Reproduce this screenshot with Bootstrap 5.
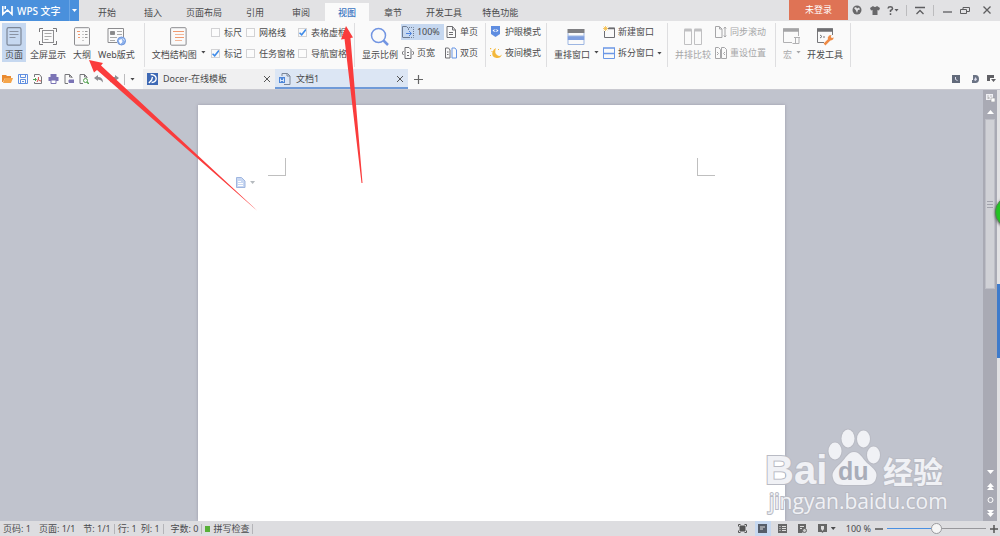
<!DOCTYPE html>
<html lang="zh-CN">
<head>
<meta charset="utf-8">
<meta name="viewport" content="width=device-width, initial-scale=1">
<title>WPS 文字</title>
<link rel="stylesheet" href="https://cdn.jsdelivr.net/npm/bootstrap@5.3.0/dist/css/bootstrap.min.css">
<style>
:root{--ink:#4a4a4c;--blue:#5b8be0;--sel:#c6d8f0}
body{font-family:"Noto Sans","Noto Sans CJK SC",sans-serif;font-size:9px;line-height:12px;color:var(--ink);background:#fafafa;overflow:hidden}
button{border:0;background:none;padding:0;color:inherit;white-space:nowrap;line-height:12px}
svg{display:block;flex:none}
.titlebar{height:21px;background:#e2e2e4}
.brand-btn{background:#4a90dc;color:#fff;font-size:10px;font-weight:500;width:79px;height:21px;padding:0 0 0 2px}
.brand-btn .split{border-left:1px solid #6ba5e4;width:10px;height:21px}
.tabs{margin-left:5px}
.mtab{padding:1px 13px 0;margin:3px 1px 0;height:18px}
.mtab.wide{padding:1px 9px 0}
.mtab.on{background:#fafafa;color:#3c76c2;font-weight:500}
.login{background:#df7355;color:#fff;width:59px;height:20px}
.wbtn{width:18px;height:20px;color:#5e5e60}
.vline{width:1px;height:11px;background:#bcbcbe}
.ribbon{height:48px;padding-top:2px;padding-left:2px}
.rgroup{display:flex;height:44px;border-right:1px solid #dedee0;padding-right:4px}
.views{gap:1px;padding-right:2px}
.bigbtn{height:39px;padding:2px 3px 0}
.bigbtn svg.pic{margin:0 auto 3px}
.bigbtn.on,.smallbtn.on{background:var(--sel)}
.smallbtn{height:16px;padding:0 1px;display:flex;align-items:center;gap:3px}
.smallgrid,.checks{display:grid;grid-auto-rows:17px;row-gap:4px;margin-top:1px;align-content:start}
.modes{padding-left:3px}
.two{grid-template-columns:43px auto;padding-right:2px}
.dim{color:#a6a6a8}
.caret{display:inline-block;width:5px;height:3px;background:currentColor;clip-path:polygon(0 0,100% 0,50% 100%);flex:none}
.checks{grid-template-columns:35px 52px auto;padding:0 3px 0 2px}
.checks label{display:flex;align-items:center;gap:4px;white-space:nowrap}
.checks input{appearance:none;width:9px;height:9px;margin:0;border:1px solid #d2d2d4;background:#fcfcfc}
.checks input:checked{background:url("data:image/svg+xml,%3Csvg xmlns='http://www.w3.org/2000/svg' viewBox='0 0 8 8'%3E%3Cpath d='M1 4l2 2 4-5' fill='none' stroke='%233f8be8' stroke-width='1.5'/%3E%3C/svg%3E") center/8px no-repeat;border-color:#d2d2d4}
.docbar{height:21px;border-bottom:1px solid #c9c9d0}
.quick{gap:5px;padding-left:2px}
.doctab{height:20px;padding:0 5px 0 4px;background:#f0f0f1;width:132px}
.doctab a{margin-left:5px}
.doctab.on{background:#dce6f4;width:133px;box-shadow:inset 0 -2px #6f9ad8}
.addtab{margin-left:6px}
.desk{background:#c0c3cd;min-height:0;overflow:hidden}
.sheet{width:59.7%;margin-top:15px;background:#fff;box-shadow:0 0 3px #9a9aa8;padding:53px 70px 0}
.corner{width:18px;height:18px;border-bottom:1px solid #bfbfbf}
.corner.l{border-right:1px solid #bfbfbf}.corner.r{border-left:1px solid #bfbfbf}
.smarttag{margin:1px 0 0 -32px}
.scroll{width:14px;background:#a9aab4;color:#fff}
.thumb{width:10px;height:170px;background:#d0d1d6;border:1px solid #bdbec6;margin-top:5px}
.edge{width:3px;background:#e2e2e4}
.handle{right:0;top:194px;width:3px;height:74px;background:#3f7bcb}
.ball{right:-27px;top:106px;width:32px;height:32px;border-radius:50%;background:#23c323;border:1px solid #4c8a4c;box-shadow:0 1px 3px #555}
.wmark{right:38px;bottom:1px}
.statusbar{height:15px;background:#dddde0;white-space:nowrap;padding-left:3px}
.statusbar .bar{width:1px;height:10px;background:#b4b4b8;margin:0 3px}
.spell{margin-left:3px}
.statusright{padding-right:2px}
.zoomtext{margin-left:10px}
.viewbtn{width:16px;height:15px}
.viewbtn.on{background:var(--sel)}
.zoomer{appearance:none;width:99px;height:11px;background:linear-gradient(90deg,#4a90e2 50%,#98989c 50%) center/100% 1px no-repeat;margin:0 4px}
.zoomer::-webkit-slider-thumb{appearance:none;width:11px;height:11px;border-radius:50%;background:#f6f6f6;border:1px solid #9a9a9e}
.arrows{left:0;top:0;pointer-events:none;z-index:5}
</style>
<script src="https://cdn.jsdelivr.net/npm/bootstrap@5.3.0/dist/js/bootstrap.bundle.min.js"></script>
</head>
<body class="vh-100 d-flex flex-column position-relative">

<header class="titlebar d-flex align-items-start">
  <button class="brand-btn d-flex align-items-center">
    <svg width="11" height="11" viewBox="0 0 11 11" fill="none" stroke="#fff" stroke-width="1.6"><path d="M.8 1v8.3L5.5 5l4.500 4.300V1M3.200 1v3"/></svg>
    <span class="ms-1 me-auto">WPS 文字</span>
    <span class="split d-flex align-items-center justify-content-center"><i class="caret"></i></span>
  </button>
  <nav class="d-flex tabs">
    <button class="mtab">开始</button><button class="mtab">插入</button><button class="mtab wide">页面布局</button><button class="mtab">引用</button><button class="mtab">审阅</button><button class="mtab on">视图</button><button class="mtab">章节</button><button class="mtab wide">开发工具</button><button class="mtab wide">特色功能</button>
  </nav>
  <div class="d-flex align-items-center ms-auto">
    <button class="login">未登录</button>
    <button class="wbtn" aria-label="皮肤中心"><svg class="m-auto" width="10" height="10" viewBox="0 0 10 10"><circle cx="5" cy="5" r="4.500" fill="#68686a"/><path d="M2 3l2-1 1 1.500 2-1 1 2-2 .5-1 3-1-2.500z" fill="#e2e2e4"/></svg></button>
    <button class="wbtn" aria-label="换肤"><svg class="m-auto" width="10" height="9" viewBox="0 0 10 9"><path d="M3 0q2 2 4 0l3 2-1 2.500-1.500-.5V9h-5V4L1 4.500 0 2z" fill="#68686a"/></svg></button>
    <button class="wbtn d-flex align-items-center justify-content-center" aria-label="帮助"><svg width="7" height="9" viewBox="0 0 7 9" fill="none" stroke="#5e5e60" stroke-width="1.500"><path d="M1 2.500Q1.200.8 3.300.8T5.600 2.600Q5.600 3.700 3.500 4.500V6M3.500 7.300V9"/></svg><i class="caret"></i></button>
    <span class="vline ms-1"></span>
    <button class="wbtn mx-1" aria-label="收起功能区"><svg class="m-auto" width="10" height="9" viewBox="0 0 10 9" fill="none" stroke="#5e5e60" stroke-width="1.300"><path d="M0 1.500h10M1.500 8L5 4.500 8.500 8"/></svg></button>
    <span class="vline"></span>
    <button class="wbtn ms-1" aria-label="最小化"><svg class="m-auto" width="9" height="9" viewBox="0 0 9 9" stroke="#5e5e60" stroke-width="1.300"><path d="M0 6h9"/></svg></button>
    <button class="wbtn" aria-label="还原"><svg class="m-auto" width="10" height="9" viewBox="0 0 10 9" fill="none" stroke="#5e5e60"><path d="M.5 3.500h6v4h-6zM3 3.500v-2h6.500v4h-3"/></svg></button>
    <button class="wbtn ms-1 me-1" aria-label="关闭"><svg class="m-auto" width="8" height="8" viewBox="0 0 8 8" stroke="#5e5e60" stroke-width="1.300"><path d="M.5.5l7 7m0-7l-7 7"/></svg></button>
  </div>
</header>

<section class="ribbon d-flex flex-shrink-0">
  <div class="rgroup">
    <div class="d-flex views">
      <button class="bigbtn on"><svg class="pic" width="16" height="19" viewBox="0 0 16 19" fill="none" stroke="#7c8697"><rect x="1" y=".7" width="14" height="17.500" rx="1.500" stroke-width="1.200"/><path d="M3.500 4.500h9M3.500 7.500h9M3.500 10.500h6" stroke="#8a93a3"/></svg>页面</button>
      <button class="bigbtn"><svg class="pic" width="18" height="19" viewBox="0 0 18 19" fill="none" stroke="#77777a"><path d="M.5 5V1.500H4M14 1.500h3.500V5M17.500 14v3.500H14M4 17.500H.5V14"/><rect x="3.500" y="3.500" width="11" height="12" stroke="#8c8c8f"/><path d="M5.500 6.500h7M5.500 9.500h7M5.500 12.500h4" stroke="#aaa"/></svg>全屏显示</button>
      <button class="bigbtn"><svg class="pic" width="16" height="19" viewBox="0 0 16 19" fill="none" stroke="#8c8c8f"><rect x=".5" y=".7" width="15" height="17.500" rx="1"/><path d="M8.500 4.500h1M11 4.500h2.500M8.500 7.500h1M11 7.500h2.500M8.500 10.500h1M11 10.500h2.500M8.500 13.500h1" stroke="#999"/><path d="M3 4.500h3M4 7.500h2M4 10.500h2" stroke="#f09a70"/></svg>大纲</button>
      <button class="bigbtn"><svg class="pic" width="19" height="19" viewBox="0 0 19 19" fill="none" stroke="#8c8c8f"><path d="M10 15.500H1V1.500h15.500V10"/><path d="M3.500 4.500h4v3h-4z" fill="#888"/><path d="M10 4.500h5M10 7.500h5M3 10.500h7M3 13.500h5" stroke="#aaa"/><circle cx="14.500" cy="14" r="4" fill="#8fb2ec" stroke="#6f97dc"/><path d="M12 13.500l2.500-1 .5 2.500-1.500 1.500zM16 11.500l1.500 2" stroke="#fff" fill="#fff" stroke-width=".8"/></svg>Web版式</button>
    </div>
  </div>
  <div class="rgroup">
    <button class="bigbtn ms-1"><svg class="pic" width="17" height="19" viewBox="0 0 17 19" fill="none" stroke="#8c8c8f"><rect x=".6" y=".7" width="15.500" height="17.500" rx="1"/><path d="M3 4.500h11M5 10.500h9" stroke="#f09a70" stroke-width="1.200"/><path d="M5 7.500h9M5 13.500h7" stroke="#f3b799"/></svg>文档结构图<i class="caret ms-1 mb-1"></i></button>
    <div class="checks">
      <label><input type="checkbox">标尺</label><label><input type="checkbox">网格线</label><label><input type="checkbox" checked>表格虚框</label>
      <label><input type="checkbox" checked>标记</label><label><input type="checkbox">任务窗格</label><label><input type="checkbox">导航窗格</label>
    </div>
  </div>
  <div class="rgroup">
    <button class="bigbtn ms-1"><svg class="pic" width="19" height="19" viewBox="0 0 19 19" fill="none" stroke="#7295e2"><circle cx="8.500" cy="8.500" r="7" stroke-width="1.500"/><path d="M13.500 13.500l4.500 4.500" stroke-width="2.500"/></svg>显示比例</button>
    <div class="smallgrid two">
      <button class="smallbtn on"><svg width="12" height="12" viewBox="0 0 12 12" fill="none" stroke="#6e7c92"><path d="M.5 11V.5h4l2 2V4M.5 11.500H7"/><path d="M7 1.500h4.500v10H7" stroke-dasharray="1 1"/><path d="M4 7.500h5M7 5l2.500 2.500L7 10" stroke="#4f83dc"/></svg>100%</button>
      <button class="smallbtn"><svg width="12" height="12" viewBox="0 0 12 12" fill="none" stroke="#6e6e72"><path d="M2 .5h5.500L10.500 4v7.500H2zM7.500.5V4h3M4 6.500h4M4 8.500h4"/></svg>单页</button>
      <button class="smallbtn"><svg width="12" height="12" viewBox="0 0 12 12" fill="none" stroke="#6e6e72"><path d="M3 .5h4l2 2v9H3zM5 5.500h2M5 8.500h2"/><path d="M1.500 4L0 6l1.500 2M10.500 4L12 6l-1.500 2"/></svg>页宽</button>
      <button class="smallbtn"><svg width="12" height="12" viewBox="0 0 12 12" fill="none" stroke="#6e6e72"><path d="M.5 1h3l1.500 2v8H.5zM2 5h1.500M2 7.500h1.500"/><path d="M7 1h3l1.500 2v8H7z" stroke="#6795e4"/></svg>双页</button>
    </div>
  </div>
  <div class="rgroup">
    <div class="smallgrid modes">
      <button class="smallbtn"><svg width="12" height="12" viewBox="0 0 12 12"><path d="M1 0h9v8l-4.500 3L1 8z" fill="#5f8de0"/><path d="M2.500 4.500Q5.500 1.500 8.500 4.500 5.500 7.500 2.500 4.500" fill="#fff"/><circle cx="5.500" cy="4.500" r="1.200" fill="#5f8de0"/></svg>护眼模式</button>
      <button class="smallbtn"><svg width="12" height="12" viewBox="0 0 12 12" fill="#f3b83c"><path d="M6 1q-2 5 1 7t5-.5Q10.500 11.500 6.500 11 1 10 2.500 5 3.500 2 6 1"/><path d="M0 1h1.200v1.200H0zM1.500 4h1v1h-1zM0 8h1v1H0zM8 2h1v1H8z"/></svg>夜间模式</button>
    </div>
  </div>
  <div class="rgroup">
    <button class="bigbtn ms-1"><svg class="pic" width="18" height="19" viewBox="0 0 18 19"><path d="M.5 2h17v4H.5z" fill="#7f7f82"/><path d="M.5 9h17v4H.5z" fill="#7f9fdf"/><path d="M1 6v3h16V6M1 13v4.500h16V13" fill="none" stroke="#9db6e2"/></svg>重排窗口<i class="caret ms-1 mb-1"></i></button>
    <div class="smallgrid">
      <button class="smallbtn"><svg width="12" height="12" viewBox="0 0 12 12" fill="none" stroke="#6e6e72"><path d="M1.500 5v6.500h10V2H6"/><path d="M5 2.500h7" stroke-width="1.500"/><path d="M0 2.500h5M2.500 0v5M.7.7l3.600 3.600M4.300.7L.7 4.300" stroke="#f5bd45" stroke-width=".8"/></svg>新建窗口</button>
      <button class="smallbtn"><svg width="12" height="12" viewBox="0 0 12 12" fill="none" stroke="#6c98e6"><path d="M.5 1v10.500h11V1M.5 6.500h11"/><path d="M0 1h12M0 6.500h12" stroke-width="1.500"/></svg>拆分窗口<i class="caret"></i></button>
    </div>
  </div>
  <div class="rgroup dim">
    <button class="bigbtn ms-1"><svg class="pic" width="18" height="19" viewBox="0 0 18 19" fill="none" stroke="#c0c0c2"><path d="M.5 2.500h7v15h-7zM10.500 2.500h7v15h-7z"/><path d="M.5 3h7M10.500 3h7" stroke-width="3"/></svg>并排比较</button>
    <div class="smallgrid pe-1">
      <button class="smallbtn"><svg width="12" height="12" viewBox="0 0 12 12" fill="none" stroke="#a6a6a8"><path d="M4 .5H.5v11H7V3L4.500.5V3H7"/><path d="M10 1v10M8.800 2.500L10 1l1.200 1.500M8.800 9.500L10 11l1.200-1.500"/></svg>同步滚动</button>
      <button class="smallbtn"><svg width="12" height="12" viewBox="0 0 12 12" fill="none" stroke="#a6a6a8"><path d="M.5.500h3l2 2v9h-5zM6.500.500h3l2 2v9h-5zM2 5l1.500 1.500L2 8M10 5L8.500 6.500 10 8"/></svg>重设位置</button>
    </div>
  </div>
  <div class="rgroup">
    <button class="bigbtn ms-1 dim"><svg class="pic" width="18" height="19" viewBox="0 0 18 19" fill="none" stroke="#b0b0b2"><path d="M9 15.500H.5V2h15v7"/><path d="M0 3h16" stroke-width="3.500" stroke="#a4a4a6"/><path d="M11 10.500h6M12.500 10.500v6h-3M16 10.500v6h-4"/></svg>宏<i class="caret ms-1 mb-1"></i></button>
    <button class="bigbtn"><svg class="pic" width="18" height="19" viewBox="0 0 18 19" fill="none" stroke="#77777a"><path d="M8 15.500H1.500V2h15v6"/><path d="M1 3h16" stroke-width="3.500" stroke="#6f6f72"/><path d="M4 8l2 1.500L4 11M7 10h2"/><path d="M8.500 17.500l5-5" stroke="#ee8a45" stroke-width="2.500"/><path d="M13 8.500q-2 2-.5 4t4.500 0l.8-2-2 .5-1-1 .7-2z" fill="#ee8a45" stroke="none"/></svg>开发工具</button>
  </div>
</section>

<section class="docbar d-flex flex-shrink-0 align-items-center">
  <div class="quick d-flex align-items-center">
    <button aria-label="打开"><svg width="11" height="10" viewBox="0 0 11 10"><path d="M0 1h4l1 1h4v2H3L1 8H0z" fill="#e98a30"/><path d="M3 4h8L9 9H1z" fill="#f5a54a"/></svg></button>
    <button aria-label="保存"><svg width="10" height="10" viewBox="0 0 10 10" fill="none" stroke="#5f8ee0"><path d="M.5.5h9v9h-9zM2.500.5v3h5v-3M2.500 9.500v-4h5v4M4 7.500h2"/></svg></button>
    <button aria-label="输出为PDF"><svg width="10" height="10" viewBox="0 0 10 10" fill="none" stroke="#77777a"><path d="M1.500 3V.500h5L8.500 3v6.500h-7V8"/><path d="M0 5.500h3M2 4l1.500 1.500L2 7" stroke="#4fa352"/><path d="M4 8q2-3 1.500-5M5 5q1 2 3 2" stroke="#d8504c"/></svg></button>
    <button aria-label="打印"><svg width="11" height="10" viewBox="0 0 11 10"><path d="M2.500 0h6v3h-6zM.500 3h10v4H.500z" fill="#7b74b5"/><path d="M3 6h5v3.500H3z" fill="#fff" stroke="#7b74b5"/></svg></button>
    <button aria-label="打印设置"><svg width="10" height="10" viewBox="0 0 10 10" fill="none" stroke="#77777a"><path d="M4 9.500H1V.500h4.500L8 3v1M5.500.500V3H8"/><path d="M5 6h5v2.500H5z" fill="#7b74b5" stroke="#7b74b5"/></svg></button>
    <button aria-label="打印预览"><svg width="10" height="10" viewBox="0 0 10 10" fill="none" stroke="#77777a"><path d="M4 9.500H1V.500h4.500L8 3v1M5.500.500V3H8"/><circle cx="6.500" cy="6.500" r="2" stroke="#56a352"/><path d="M8 8l2 2" stroke="#56a352" stroke-width="1.500"/></svg></button>
    <button aria-label="撤销"><svg width="10" height="10" viewBox="0 0 10 10"><path d="M0 4l4-3v2q5 0 5 5.500Q7 5.500 4 5.500V7z" fill="#8e8e92"/></svg></button>
    <button aria-label="恢复"><svg width="10" height="10" viewBox="0 0 10 10"><path d="M10 4L6 1v2Q1 3 1 8.500 3 5.500 6 5.500V7z" fill="#8e8e92"/></svg></button>
    <span class="vline"></span>
    <button aria-label="自定义快速访问工具栏" class="d-flex"><i class="caret"></i></button>
  </div>
  <div class="doctab d-flex align-items-center ms-2">
    <svg width="11" height="12" viewBox="0 0 12 12" preserveAspectRatio="none"><path d="M0 0h12v12H0z" fill="#3d68b4"/><path d="M4 1.500q6 .5 6 4T5 9.500M6 4l-1 3-3 3" fill="none" stroke="#fff" stroke-width="1.500"/></svg>
    <a href="#" class="text-reset text-decoration-none me-auto">Docer-在线模板</a>
    <button aria-label="关闭标签"><svg width="6" height="6" viewBox="0 0 6 6" stroke="#555"><path d="M0 0l6 6m0-6L0 6"/></svg></button>
  </div>
  <div class="doctab on d-flex align-items-center">
    <svg width="12" height="12" viewBox="0 0 12 12" fill="none" stroke="#7a8698"><path d="M3 3V.5h5.500L11 3v8.500H5"/><path d="M8 .5V3h3"/><path d="M0 4h6v6H0z" fill="#4d86d8" stroke="none"/><path d="M1.500 5.500v3L3 7l1.500 1.500v-3" stroke="#fff" stroke-width=".8"/></svg>
    <a href="#" class="text-reset text-decoration-none me-auto">文档1</a>
    <button aria-label="关闭标签"><svg width="6" height="6" viewBox="0 0 6 6" stroke="#555"><path d="M0 0l6 6m0-6L0 6"/></svg></button>
  </div>
  <button class="addtab" aria-label="新建标签"><svg width="9" height="9" viewBox="0 0 9 9" stroke="#666"><path d="M4.500 0v9M0 4.500h9" stroke-width="1.200"/></svg></button>
  <div class="d-flex ms-auto gap-2 pe-1">
    <button aria-label="最近"><svg width="8" height="8" viewBox="0 0 8 8"><path d="M0 0h8v8H0z" fill="#626a7a"/><path d="M3.500 2v2.500l2 1" stroke="#dde" fill="none"/></svg></button>
    <button class="ms-1" aria-label="稻壳"><svg width="7" height="8" viewBox="0 0 7 8"><path d="M1 0h2.500q3.500 0 3.500 4T3.500 8H0V5h1z" fill="#6b7384"/><path d="M2 5l1.500-3L5 4.500 3.500 6z" fill="#dde"/></svg></button>
    <button aria-label="窗口列表"><svg width="9" height="8" viewBox="0 0 9 8"><path d="M0 0h7v3H3v3H0zM4 4h5L6.500 7z" fill="#606065"/></svg></button>
  </div>
</section>

<main class="desk d-flex flex-grow-1 position-relative">
  <div class="flex-grow-1 d-flex justify-content-center">
    <article class="sheet">
      <div class="d-flex justify-content-between"><span class="corner l"></span><span class="corner r"></span></div>
      <button class="d-flex align-items-center gap-1 smarttag" aria-label="段落布局"><svg width="10" height="11" viewBox="0 0 10 11" fill="#c9d8f2" stroke="#9fb6e0"><path d="M.5.5h5L9 4v6.500H.5z"/><path d="M2 4.500h3M2 6.500h5M2 8.500h5" stroke="#fff"/></svg><i class="caret text-secondary opacity-50"></i></button>
    </article>
  </div>
  <aside class="scroll d-flex flex-column align-items-center">
    <svg class="mt-1" width="9" height="8" viewBox="0 0 9 8"><path d="M0 0h7v6H0z" fill="#f0f0f4"/><path d="M1.500 2h1M4.500 2h1M1.500 4h2" stroke="#888"/><path d="M5 4h4v4H5z" fill="#fff" stroke="#999" stroke-width=".6"/></svg>
    <svg class="mt-2" width="7" height="4" viewBox="0 0 7 4"><path d="M0 4l3.500-4L7 4z" fill="#fff"/></svg>
    <div class="thumb d-flex align-items-center justify-content-center"><svg width="6" height="8" viewBox="0 0 6 8" stroke="#a2a3ac"><path d="M0 1.500h6M0 4.500h6M0 7.500h6"/></svg></div>
    <svg class="mt-auto mb-1" width="7" height="48" viewBox="0 0 7 48" fill="#fff"><path d="M0 1h7L3.500 5zM0 18l3.500-4L7 18zM0 21l3.500-4L7 21zM0 41h7l-3.500 4zM0 44h7l-3.500 4z"/><circle cx="3.500" cy="31" r="2.500" fill="none" stroke="#fff"/></svg>
  </aside>
  <div class="edge"></div>
  <button class="handle position-absolute" aria-label="任务窗格"></button>
  <button class="ball position-absolute" aria-label="悬浮球"></button>
  <svg class="wmark position-absolute" width="200" height="96" viewBox="0 0 200 96" fill="#f0f1f5" stroke="#b9bbc4" stroke-width="2" paint-order="stroke" font-family="Noto Sans,Noto Sans CJK SC,sans-serif">
    <ellipse cx="73" cy="27" rx="6.500" ry="8.500"/><ellipse cx="86" cy="14.500" rx="6.500" ry="9"/><ellipse cx="101.500" cy="15" rx="6.500" ry="8.500"/><ellipse cx="111.500" cy="31" rx="6.500" ry="8.500"/>
    <path d="M92 28c6 0 8 6 13 11 7 6 11 9 9 15-2 8-8 7-22 7s-19 1-21-7c-2-6 3-10 8-15 5-5 7-11 13-11z"/>
    <text x="3" y="60" font-size="40" font-weight="700" font-family="Liberation Sans,sans-serif">Bai</text>
    <text x="76" y="56" font-size="25" font-weight="700" font-family="Liberation Sans,sans-serif" fill="#a9adb9" stroke="none">du</text>
    <text x="121" y="59" font-size="30" font-weight="700">经验</text>
    <text x="7" y="85" font-size="21" font-family="Open Sans,sans-serif">jingyan.baidu.com</text>
  </svg>
</main>

<footer class="statusbar d-flex align-items-center flex-shrink-0">
  <span>页码: 1</span><span class="ms-2">页面: 1/1</span><span class="ms-2">节: 1/1</span><span class="bar"></span><span>行: 1</span><span class="ms-1">列: 1</span><span class="bar"></span><span class="ms-1">字数: 0</span><span class="bar"></span>
  <svg width="5" height="6" viewBox="0 0 5 6"><path d="M0 0h5v6H0z" fill="#58b038"/></svg><span class="spell">拼写检查</span><span class="bar"></span>
  <div class="statusright d-flex align-items-center ms-auto">
    <div class="d-flex gap-1">
      <button class="viewbtn" aria-label="全屏"><svg class="m-auto" width="9" height="9" viewBox="0 0 9 9" fill="none" stroke="#555"><path d="M.5 2.500v-2h2M6.500.5h2v2M8.500 6.500v2h-2M2.500 8.500h-2v-2"/><path d="M2 2h5v5H2z" fill="#555"/></svg></button>
      <button class="viewbtn on" aria-label="页面视图"><svg class="m-auto" width="9" height="9" viewBox="0 0 9 9"><path d="M0 0h9v9H0z" fill="#555d6a"/><path d="M2 3h5M2 5h3" stroke="#ddd"/></svg></button>
      <button class="viewbtn" aria-label="大纲视图"><svg class="m-auto" width="9" height="9" viewBox="0 0 9 9"><path d="M0 0h9v9H0z" fill="#666"/><path d="M1.500 2.500h1M4 2.500h4M1.500 4.500h1M4 4.500h4M1.500 6.500h1M4 6.500h4" stroke="#ddd"/></svg></button>
      <button class="viewbtn" aria-label="Web视图"><svg class="m-auto" width="9" height="9" viewBox="0 0 9 9"><path d="M0 0h8v4L4 9H0z" fill="#666"/><path d="M2 2.500h4M2 4.500h2" stroke="#ddd"/><circle cx="6.500" cy="6.500" r="2" fill="#ccc" stroke="#666"/></svg></button>
      <button class="viewbtn" aria-label="护眼"><svg class="m-auto" width="9" height="9" viewBox="0 0 9 9"><path d="M0 0h9v8H5.500L4.500 9l-1-1H0z" fill="#666"/><path d="M3 2h3v3L4.500 7 3 5z" fill="#ddd"/></svg></button>
    </div>
    <i class="caret"></i>
    <span class="zoomtext">100 %</span>
    <button class="ms-1" aria-label="缩小"><svg width="8" height="8" viewBox="0 0 8 8" stroke="#555"><path d="M0 4h8" stroke-width="1.500"/></svg></button>
    <input class="zoomer" type="range" min="0" max="100" value="50" aria-label="显示比例">
    <button aria-label="放大"><svg width="8" height="8" viewBox="0 0 8 8" stroke="#555" stroke-width="1.500"><path d="M0 4h8M4 0v8"/></svg></button>
  </div>
</footer>

<svg class="arrows position-absolute" width="380" height="220" viewBox="0 0 380 220" fill="#fa3c3c">
  <path d="M89 60l14 3-2 2.500L257.500 211 97 70l-3 2.500z"/>
  <path d="M346 26l7 11.500-2.500.5L362.500 183h-1L344.500 39l-3.500.5z"/>
</svg>
</body>
</html>
